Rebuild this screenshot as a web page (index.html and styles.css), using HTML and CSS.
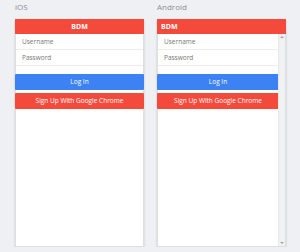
FILE: index.html
```html
<!DOCTYPE html>
<html lang="en">
<head>
    <meta charset="UTF-8">
    <meta name="viewport" content="width=device-width, initial-scale=1.0">
    <title>BDM preview</title>
    <link rel="stylesheet" href="styles.css">
</head>
<body>
    <main class="page">
        <section class="device">
            <div class="device-label">iOS</div>
            <div class="frame">
                <div class="app-bar app-bar--center">BDM</div>
                <div class="screen">
                    <div class="field">Username</div>
                    <div class="field">Password</div>
                    <div class="btn btn--blue">Log In</div>
                    <div class="btn btn--red">Sign Up With Google Chrome</div>
                </div>
            </div>
        </section>

        <section class="device">
            <div class="device-label">Android</div>
            <div class="frame">
                <div class="app-bar">BDM</div>
                <div class="screen-row">
                    <div class="screen">
                        <div class="field">Username</div>
                        <div class="field">Password</div>
                        <div class="btn btn--blue">Log In</div>
                        <div class="btn btn--red">Sign Up With Google Chrome</div>
                    </div>
                    <div class="scrollbar">
                        <span class="arrow arrow--up"></span>
                        <span class="arrow arrow--down"></span>
                    </div>
                </div>
            </div>
        </section>
    </main>
</body>
</html>
```

FILE: styles.css
```css
/* Base */
body {
    margin: 0;
    background: #eef0f4;
    font-family: 'Open Sans', 'Liberation Sans', sans-serif;
    color: #555;
}

.page {
    display: flex;
    gap: 13px;
    padding-left: 15px;
}

.device {
    width: 129px;
}

.device-label {
    height: 19px;
    box-sizing: border-box;
    font-size: 8px;
    line-height: 14px;
    color: #8a8d94;
}

.frame {
    height: 228px;
    box-sizing: border-box;
    background: #fff;
    border: 1px solid #dedfe4;
    box-shadow: 0 1px 2px rgba(0, 0, 0, 0.18);
    display: flex;
    flex-direction: column;
}

.app-bar {
    height: 15px;
    margin: -1px -1px 0;
    background: #f44a3c;
    color: #fff;
    font-size: 7px;
    font-weight: bold;
    line-height: 16px;
    padding-left: 4px;
}

.app-bar--center {
    text-align: center;
    padding-left: 0;
}

.screen-row {
    flex: 1;
    display: flex;
}

.screen {
    flex: 1;
}

.field {
    height: 15px;
    border-bottom: 1px solid #ececec;
    font-size: 6.5px;
    line-height: 16px;
    padding-left: 6px;
    color: #777;
}

.field + .field {
    margin-bottom: 8px;
}

.btn {
    height: 16px;
    border-radius: 1px;
    color: #fff;
    font-size: 6.5px;
    line-height: 16px;
    text-align: center;
    margin: 0 -1px 3px;
}

.btn--blue {
    background: #3d82f4;
}

.btn--red {
    background: #f44a3c;
}

/* scroll track on the android preview */
.scrollbar {
    width: 6px;
    background: #f1f1f1;
    border-left: 1px solid #e8e8e8;
    display: flex;
    flex-direction: column;
    justify-content: space-between;
    align-items: center;
    padding: 2px 0;
}

.arrow {
    width: 0;
    height: 0;
    border-left: 2px solid transparent;
    border-right: 2px solid transparent;
}

.arrow--up {
    border-bottom: 2px solid #a3a3a3;
}

.arrow--down {
    border-top: 2px solid #a3a3a3;
}
```
